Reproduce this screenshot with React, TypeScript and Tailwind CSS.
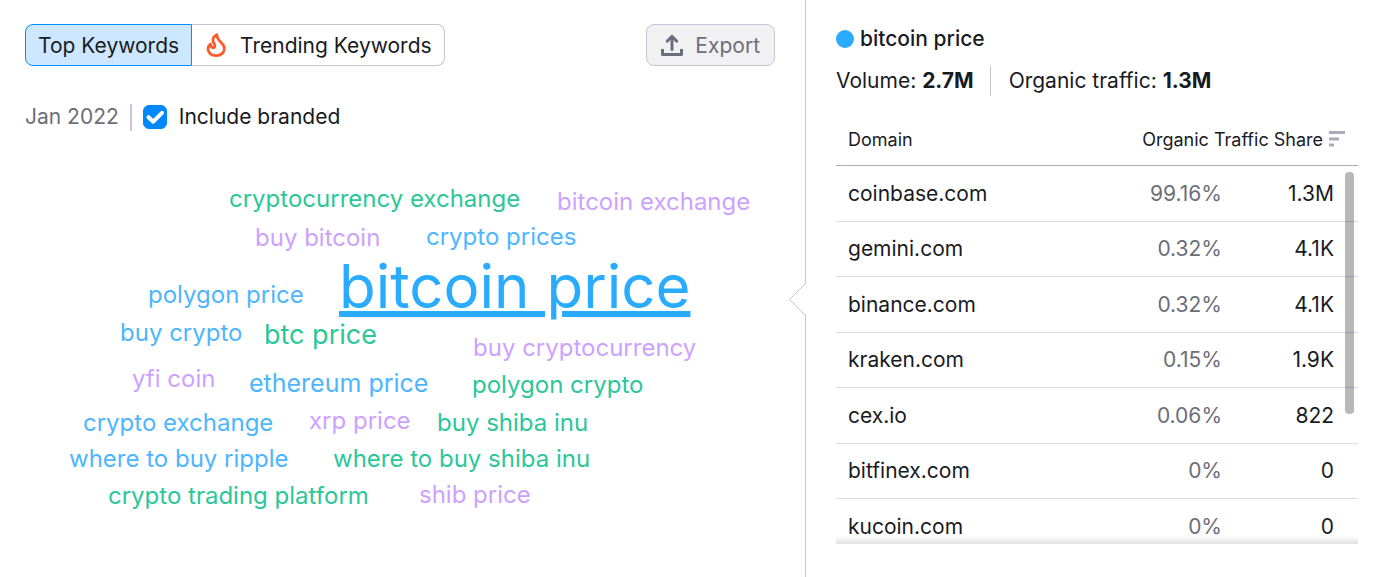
import { useState } from "react";

const GREEN = "text-[#2bc798]";
const BLUE = "text-[#4db6ff]";
const PURPLE = "text-[#cda2ff]";

const words = [
  { text: "cryptocurrency exchange", place: "left-[229px] top-[183px] text-[24px]", tone: GREEN },
  { text: "bitcoin exchange", place: "left-[557px] top-[186px] text-[24px]", tone: PURPLE },
  { text: "buy bitcoin", place: "left-[255px] top-[222px] text-[24px]", tone: PURPLE },
  { text: "crypto prices", place: "left-[426px] top-[221px] text-[24px]", tone: BLUE },
  { text: "polygon price", place: "left-[148px] top-[279px] text-[24px]", tone: BLUE },
  { text: "buy crypto", place: "left-[120px] top-[317px] text-[24px]", tone: BLUE },
  { text: "btc price", place: "left-[264px] top-[319px] text-[27px]", tone: GREEN },
  { text: "buy cryptocurrency", place: "left-[473px] top-[332px] text-[24px]", tone: PURPLE },
  { text: "yfi coin", place: "left-[132px] top-[363px] text-[24px]", tone: PURPLE },
  { text: "ethereum price", place: "left-[249px] top-[367px] text-[25px]", tone: BLUE },
  { text: "polygon crypto", place: "left-[472px] top-[369px] text-[24px]", tone: GREEN },
  { text: "crypto exchange", place: "left-[83px] top-[407px] text-[24px]", tone: BLUE },
  { text: "xrp price", place: "left-[309px] top-[405px] text-[24px]", tone: PURPLE },
  { text: "buy shiba inu", place: "left-[437px] top-[407px] text-[24px]", tone: GREEN },
  { text: "where to buy ripple", place: "left-[69px] top-[443px] text-[24px]", tone: BLUE },
  { text: "where to buy shiba inu", place: "left-[333px] top-[443px] text-[24px]", tone: GREEN },
  { text: "crypto trading platform", place: "left-[108px] top-[480px] text-[24px]", tone: GREEN },
  { text: "shib price", place: "left-[419px] top-[479px] text-[24px]", tone: PURPLE },
];

const rows = [
  { domain: "coinbase.com", share: "99.16%", traffic: "1.3M" },
  { domain: "gemini.com", share: "0.32%", traffic: "4.1K" },
  { domain: "binance.com", share: "0.32%", traffic: "4.1K" },
  { domain: "kraken.com", share: "0.15%", traffic: "1.9K" },
  { domain: "cex.io", share: "0.06%", traffic: "822" },
  { domain: "bitfinex.com", share: "0%", traffic: "0" },
  { domain: "kucoin.com", share: "0%", traffic: "0" },
];

function FlameIcon() {
  return (
    <svg className="h-[26px] w-5" viewBox="0 0 20 26" fill="none" aria-hidden="true">
      <path
        d="M10.8 1.6C5.800 4.600 6.200 8 8.300 10.800C9.800 13.200 8.600 15 7 14.700C5.400 14.400 4.500 13 4.400 11.200C2.700 12.600 2 14.300 2 16C2 20 5.600 22.700 10.200 22.700C14.900 22.700 18.400 19.600 18.400 15.600C18.400 9.800 10.800 8.600 10.800 1.600Z"
        stroke="#ff5a29"
        strokeWidth="2.800"
        strokeLinejoin="round"
      />
    </svg>
  );
}

function ExportIcon() {
  return (
    <svg className="h-6 w-[22px]" viewBox="0 0 22 24" fill="none" stroke="#6c6e79" strokeWidth="3" aria-hidden="true">
      <path d="M11 15.500V3" strokeLinecap="round" />
      <path d="M6.200 7.200L11 2.400L15.800 7.200" strokeLinecap="round" strokeLinejoin="round" />
      <path d="M1.500 15V20.500H20.500V15" strokeLinejoin="round" />
    </svg>
  );
}

function KeywordPanel() {
  const [branded, setBranded] = useState(true);
  return (
    <section className="relative min-h-[577px] border-r border-[#c4c7cf] px-6 pt-6">
      <div className="flex items-center justify-between pr-1.5">
        <div className="flex h-[42px] pl-px">
          <button className="flex items-center rounded-l-lg border border-[#008ff8] bg-[#cce7ff] px-3 pt-0.5">
            Top Keywords
          </button>
          <button className="flex items-center gap-3.5 rounded-r-lg border border-l-0 border-[#c4c7cf] pt-0.5 pr-3 pl-3.5">
            <FlameIcon />
            Trending Keywords
          </button>
        </div>
        <button className="flex h-[42px] items-center gap-3 rounded-lg border border-[#c4c7cf] bg-[#f1f1f4] px-3.5 pt-0.5 text-[#6c6e79]">
          <ExportIcon />
          Export
        </button>
      </div>
      <div className="mt-9 flex h-[30px] items-center gap-[11px] pl-px">
        <span className="text-[#6c6e79]">Jan 2022</span>
        <span className="h-[27px] w-0.5 bg-[#c4c7cf]" />
        <label className="flex items-center gap-3">
          <span className="relative flex h-6 w-6">
            <input
              type="checkbox"
              checked={branded}
              onChange={(e) => setBranded(e.target.checked)}
              className="peer h-6 w-6 appearance-none rounded-md border border-[#c4c7cf] checked:border-[#0088ff] checked:bg-[#0088ff]"
            />
            <svg
              className="pointer-events-none absolute inset-0 hidden h-6 w-6 peer-checked:block"
              viewBox="0 0 24 24"
              fill="none"
              stroke="#fff"
              strokeWidth="4"
              aria-hidden="true"
            >
              <path d="M5.500 12.200l4.800 4.500L19 7.800" strokeLinecap="round" strokeLinejoin="round" />
            </svg>
          </span>
          Include branded
        </label>
      </div>
      {words.map((w) => (
        <a key={w.text} href="#" className={`absolute leading-8 whitespace-nowrap ${w.place} ${w.tone}`}>
          {w.text}
        </a>
      ))}
      <a
        href="#"
        className="absolute top-[250px] left-[339px] text-[60px] leading-[72px] whitespace-nowrap text-[#29abff] underline decoration-[6px] underline-offset-3"
      >
        bitcoin price
      </a>
      <svg className="absolute top-[283px] -right-px h-[33px] w-[18px]" viewBox="0 0 18 33" aria-hidden="true">
        <path d="M18 0H17.500V.500L1.500 16.500L17.500 32.500V33H18Z" fill="#fff" />
        <path d="M17.500 .500L1.500 16.500L17.500 32.500" fill="none" stroke="#c4c7cf" />
      </svg>
    </section>
  );
}

function DetailPanel() {
  return (
    <section className="pt-6 pr-[26px] pl-[30px]">
      <h2 className="flex h-[30px] items-center gap-1.5 font-medium">
        <span className="h-[18px] w-[18px] rounded-full bg-[#29abff]" />
        bitcoin price
      </h2>
      <div className="mt-3 flex h-[30px] items-center">
        <span>
          Volume: <b>2.7M</b>
        </span>
        <span className="mr-[18px] ml-4 h-[30px] w-px bg-[#c4c7cf]" />
        <span>
          Organic traffic: <b>1.3M</b>
        </span>
      </div>
      <div className="relative mt-[18px] h-[430px] overflow-hidden">
        <table className="w-full border-separate border-spacing-0">
          <thead>
            <tr className="h-[52px] text-[18px]">
              <th className="border-b border-[#a9abb6] pl-3 text-left font-normal">Domain</th>
              <th colSpan={2} className="border-b border-[#a9abb6] pr-3 font-normal">
                <span className="flex items-center justify-end gap-1.5">
                  Organic Traffic Share
                  <svg className="h-[18px] w-[17px]" viewBox="0 0 17 18" fill="#a9abb6" aria-hidden="true">
                    <path d="M0 0H16V3H0ZM0 6.500H10V9.500H0ZM0 12.500H5V15.500H0Z" />
                  </svg>
                </span>
              </th>
            </tr>
          </thead>
          <tbody>
            {rows.map((r) => (
              <tr key={r.domain} className="odd:h-14 even:h-[55px]">
                <td className="border-b border-[#d9dbe5] pl-3">{r.domain}</td>
                <td className="border-b border-[#d9dbe5] text-right text-[#6c6e79]">{r.share}</td>
                <td className="w-[136px] border-b border-[#d9dbe5] pr-6 text-right">{r.traffic}</td>
              </tr>
            ))}
          </tbody>
        </table>
        <div className="absolute top-[58px] right-1 h-[242px] w-[9px] rounded bg-black/28" />
        <div className="absolute inset-x-0 bottom-0 h-2 bg-linear-to-b from-transparent to-black/12" />
      </div>
    </section>
  );
}

export default function App() {
  return (
    <main className="grid min-h-screen grid-cols-[806fr_578fr] bg-white font-['Inter',sans-serif] text-[21px] leading-[30px] text-[#191b23]">
      <KeywordPanel />
      <DetailPanel />
    </main>
  );
}
